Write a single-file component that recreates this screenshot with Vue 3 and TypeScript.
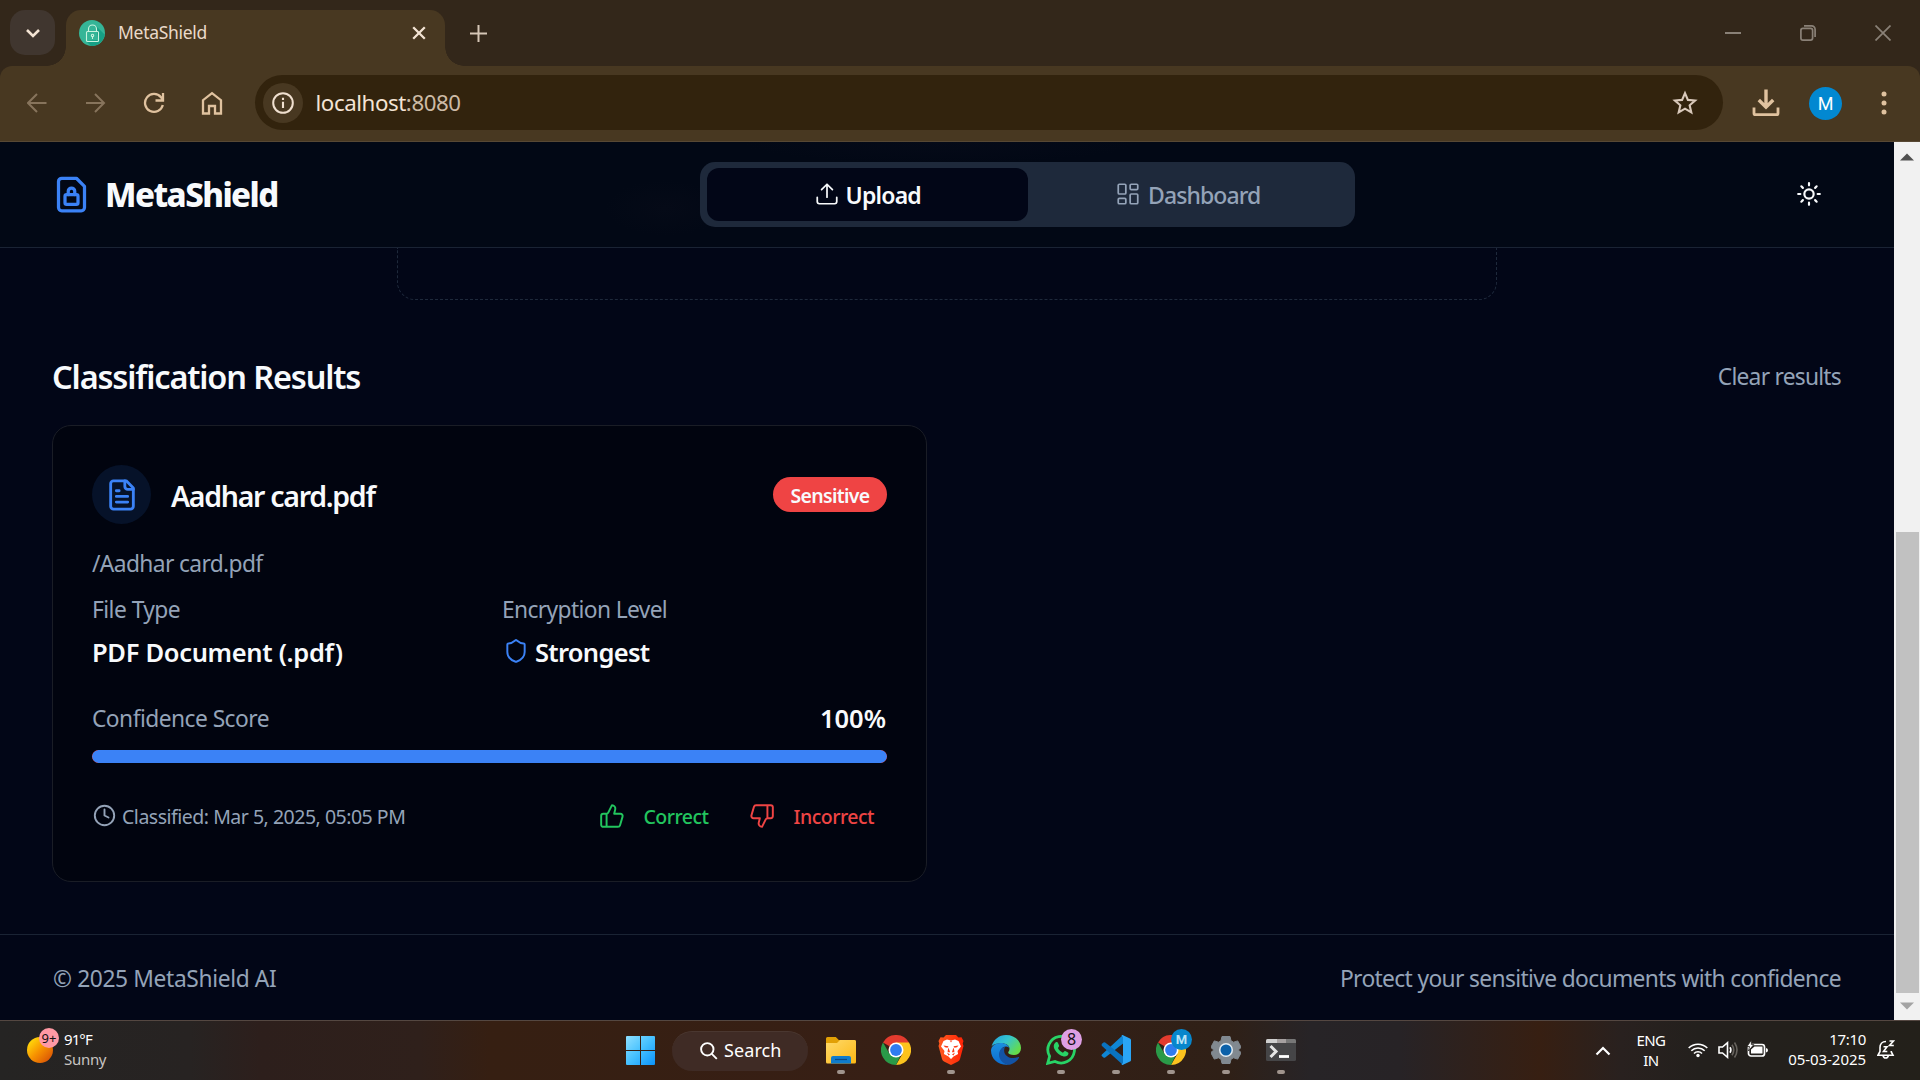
<script setup lang="ts">
interface Task { id: string; label: string; running: boolean; badge?: string; badgeKind?: string }
const tasks: Task[] = [
  { id: 'folder', label: 'File Explorer', running: true },
  { id: 'chrome', label: 'Chrome', running: false },
  { id: 'brave', label: 'Brave', running: true },
  { id: 'edge', label: 'Edge', running: false },
  { id: 'whatsapp', label: 'WhatsApp', running: true, badge: '8', badgeKind: 'pink' },
  { id: 'code', label: 'Code', running: true },
  { id: 'chrome', label: 'Chrome', running: true, badge: 'M', badgeKind: 'blue' },
  { id: 'settings', label: 'Settings', running: true },
  { id: 'terminal', label: 'Terminal', running: true },
]
const confidence = 100
</script>

<template>
  <div class="screen">
    <div class="tabstrip">
      <button class="tab-search" aria-label="Search tabs">
        <svg width="16" height="10" viewBox="0 0 16 10"><path d="M2 2l6 6 6-6" fill="none" stroke="#f3e3d3" stroke-width="2.6" /></svg>
      </button>
      <div class="tab">
        <svg class="favicon" width="26" height="26" viewBox="0 0 26 26">
          <circle cx="13" cy="13" r="13" fill="#35b597" />
          <path d="M17 6l8.6 8.6A13 13 0 0 1 12 26l-5-5 12-1z" fill="#16a085" />
          <g fill="none" stroke="#c9f3df" stroke-width="1.1"><rect x="7.5" y="11.5" width="12" height="10" rx="1" /><path d="M9.5 11.5V9a4 4 0 0 1 8 0v2.500M13.500 16v3" /><circle cx="13.500" cy="15.500" r="1.200" /></g>
        </svg>
        <span class="tab-title">MetaShield</span>
        <svg class="tab-close" width="14" height="14" viewBox="0 0 14 14"><path d="M1.200 1.200l11.600 11.600M12.800 1.200L1.200 12.800" stroke="#f3e3d3" stroke-width="2.300" /></svg>
      </div>
      <svg class="new-tab" width="17" height="17" viewBox="0 0 17 17"><path d="M8.500 0v17M0 8.500h17" stroke="#d5c6b6" stroke-width="2" /></svg>
      <div class="window-controls">
        <svg width="16" height="16" viewBox="0 0 16 16"><path d="M0 8h16" stroke="#8a8177" stroke-width="2" /></svg>
        <svg width="16" height="16" viewBox="0 0 16 16" fill="none" stroke="#8a8177" stroke-width="1.700"><rect x=".9" y="3.400" width="11.700" height="11.700" rx="2" /><path d="M4 .9h7.600a3.500 3.500 0 0 1 3.500 3.500V12" /></svg>
        <svg width="16" height="16" viewBox="0 0 16 16"><path d="M.5.5l15 15M15.500.5l-15 15" stroke="#8a8177" stroke-width="1.700" /></svg>
      </div>
    </div>

    <div class="toolbar">
      <svg class="nav-icon" width="20" height="20" viewBox="0 0 20 20" fill="none" stroke="#87745c" stroke-width="2"><path d="M19.500 10H1.200M10 1L1 10l9 9" /></svg>
      <svg class="nav-icon forward" width="20" height="20" viewBox="0 0 20 20" fill="none" stroke="#87745c" stroke-width="2"><path d="M0 10h18M9 1l9 9-9 9" /></svg>
      <svg class="nav-icon reload" width="22" height="22" viewBox="0 0 22 22" fill="none" stroke="#e0c29f" stroke-width="2.300"><path d="M19.800 13A9 9 0 1 1 18 5.200l1.400 2.200M20 1v7.500h-7.500" /></svg>
      <svg class="nav-icon home" width="22" height="24" viewBox="0 0 22 24" fill="none" stroke="#e0c29f" stroke-width="2.300"><path d="M2 22.500V9.200l9-7 9 7v13.300h-6V15H8v7.500z" /></svg>
      <div class="omnibox">
        <span class="site-info"><svg width="22" height="22" viewBox="0 0 22 22"><circle cx="11" cy="11" r="9.800" fill="none" stroke="#f0e0d0" stroke-width="2" /><path d="M11 9.700V16M11 5.800v2.300" stroke="#f0e0d0" stroke-width="2.100" /></svg></span>
        <span class="url">localhost<span class="port">:8080</span></span>
        <svg class="star" width="26" height="26" viewBox="0 0 26 26"><path d="M13 3.200l2.900 6.700 7.200.65-5.450 4.750 1.650 7.100L13 18.650 6.700 22.400l1.650-7.100L2.900 10.550l7.200-.65z" fill="none" stroke="#d9c9bb" stroke-width="2.100" /></svg>
      </div>
      <svg class="download" width="28" height="28" viewBox="0 0 28 28" fill="none" stroke="#e0c29f" stroke-width="3.400"><path d="M14 .5v17M6.800 11l7.200 7.200 7.200-7.200" /><path d="M2 18.500v5.700c0 1 .5 1.500 1.500 1.500h21c1 0 1.500-.5 1.500-1.500v-5.700" stroke-width="2.800" /></svg>
      <span class="avatar">M</span>
      <svg class="menu" width="6" height="24" viewBox="0 0 6 24" fill="#e0c29f"><circle cx="3" cy="3" r="2.500" /><circle cx="3" cy="12" r="2.500" /><circle cx="3" cy="21" r="2.500" /></svg>
    </div>

    <div class="viewport">
      <div class="page">
        <header class="header">
          <div class="brand">
            <svg width="39" height="39" viewBox="0 0 24 24" class="ico" stroke="#3b82f6" stroke-width="2"><path d="M15 2H6a2 2 0 0 0-2 2v16a2 2 0 0 0 2 2h12a2 2 0 0 0 2-2V7Z" /><rect width="8" height="6" x="8" y="12" rx="1" /><path d="M10 12v-2a2 2 0 1 1 4 0v2" /></svg>
            <span class="brand-name">MetaShield</span>
          </div>
          <nav class="tabs">
            <a class="seg active">
              <svg width="26" height="26" viewBox="0 0 24 24" class="ico" stroke="#f8fafc" stroke-width="1.600"><path d="M21 15v4a2 2 0 0 1-2 2H5a2 2 0 0 1-2-2v-4" /><path d="M17 8l-5-5-5 5M12 3v12" /></svg>
              <span class="upload-label">Upload</span>
            </a>
            <a class="seg">
              <svg width="26" height="26" viewBox="0 0 24 24" class="ico" stroke="#94a3b8" stroke-width="1.600"><rect width="7" height="9" x="3" y="3" rx="1" /><rect width="7" height="5" x="14" y="3" rx="1" /><rect width="7" height="9" x="14" y="12" rx="1" /><rect width="7" height="5" x="3" y="16" rx="1" /></svg>
              <span class="dash-label">Dashboard</span>
            </a>
          </nav>
          <svg class="theme ico" width="26" height="26" viewBox="0 0 24 24" stroke="#f8fafc" stroke-width="2"><circle cx="12" cy="12" r="4.300" /><path d="M12 2v2M12 20v2M4.930 4.930l1.410 1.410M17.660 17.660l1.410 1.410M2 12h2M20 12h2M6.340 17.660l-1.410 1.410M19.070 4.930l-1.410 1.410" /></svg>
        </header>

        <main class="main">
          <div class="dropzone"></div>
          <div class="section-head">
            <h2>Classification Results</h2>
            <a class="clear">Clear results</a>
          </div>
          <article class="card">
            <div class="card-head">
              <span class="file-badge"><svg width="34" height="34" viewBox="0 0 24 24" class="ico" stroke="#3b82f6" stroke-width="2"><path d="M15 2H6a2 2 0 0 0-2 2v16a2 2 0 0 0 2 2h12a2 2 0 0 0 2-2V7Z" /><path d="M14 2v4a2 2 0 0 0 2 2h4M10 9H8M16 13H8M16 17H8" /></svg></span>
              <h3>Aadhar card.pdf</h3>
              <span class="pill">Sensitive</span>
            </div>
            <p class="muted path">/Aadhar card.pdf</p>
            <div class="facts">
              <div class="fact">
                <p class="muted type-label">File Type</p>
                <p class="strong type-value">PDF Document (.pdf)</p>
              </div>
              <div class="fact">
                <p class="muted enc-label">Encryption Level</p>
                <p class="strong level">
                  <svg width="26" height="26" viewBox="0 0 24 24" class="ico" stroke="#3b82f6" stroke-width="1.800"><path d="M20 13c0 5-3.500 7.500-7.660 8.950a1 1 0 0 1-.67-.01C7.500 20.500 4 18 4 13V6a1 1 0 0 1 1-1c2 0 4.500-1.200 6.240-2.720a1.170 1.170 0 0 1 1.520 0C14.510 3.810 17 5 19 5a1 1 0 0 1 1 1z" /></svg>
                  <span>Strongest</span>
                </p>
              </div>
            </div>
            <div class="score"><span class="muted score-label">Confidence Score</span><span class="strong score-value">{{ confidence }}%</span></div>
            <div class="bar"><div class="bar-fill" :style="{ width: confidence + '%' }"></div></div>
            <div class="card-foot">
              <svg width="24" height="24" viewBox="0 0 24 24" class="ico clock" stroke="#94a3b8" stroke-width="1.900"><circle cx="12.500" cy="11.500" r="9.700" /><path d="M12.500 5.500v6l4 2" /></svg>
              <span class="stamp">Classified: Mar 5, 2025, 05:05 PM</span>
              <a class="vote yes">
                <svg width="26" height="26" viewBox="0 0 24 24" class="ico" stroke="#22c55e" stroke-width="1.800"><path d="M7 10v12M15 5.880L14 10h5.830a2 2 0 0 1 1.920 2.560l-2.330 8A2 2 0 0 1 17.500 22H4a2 2 0 0 1-2-2v-8a2 2 0 0 1 2-2h2.760a2 2 0 0 0 1.790-1.110L12 2a3.130 3.130 0 0 1 3 3.880Z" /></svg>
                <span>Correct</span>
              </a>
              <a class="vote no">
                <svg width="26" height="26" viewBox="0 0 24 24" class="ico" stroke="#ef4444" stroke-width="1.800"><path d="M17 14V2M9 18.120L10 14H4.170a2 2 0 0 1-1.920-2.560l2.330-8A2 2 0 0 1 6.500 2H20a2 2 0 0 1 2 2v8a2 2 0 0 1-2 2h-2.760a2 2 0 0 0-1.790 1.110L12 22a3.130 3.130 0 0 1-3-3.880Z" /></svg>
                <span>Incorrect</span>
              </a>
            </div>
          </article>
        </main>
        <footer class="footer"><span class="copy">© 2025 MetaShield AI</span><span class="tagline">Protect your sensitive documents with confidence</span></footer>
      </div>
      <div class="scrollbar">
        <svg width="14" height="8" viewBox="0 0 14 8"><path d="M0 7.500L7 .5l7 7z" fill="#505050" /></svg>
        <div class="thumb"></div>
        <svg width="14" height="8" viewBox="0 0 14 8"><path d="M0 .5h14l-7 7z" fill="#a3a3a3" /></svg>
      </div>
    </div>

    <div class="taskbar">
      <div class="weather">
        <span class="sun"><span class="count">9+</span></span>
        <div class="two-line"><span class="temp">91°F</span><span class="sunny">Sunny</span></div>
      </div>
      <div class="center">
        <svg class="start" width="29" height="29" viewBox="0 0 29 29">
          <defs><linearGradient id="win" x1="0" y1="0" x2="1" y2="1"><stop offset="0" stop-color="#8fe0ff" /><stop offset=".5" stop-color="#45c0ff" /><stop offset="1" stop-color="#0b93fb" /></linearGradient></defs>
          <path d="M1 0h13v14H0V1q0-1 1-1zM15 0h13q1 0 1 1v13H15zM0 15h14v14H1q-1 0-1-1zM15 15h14v13q0 1-1 1H15z" fill="url(#win)" />
        </svg>
        <div class="search">
          <svg width="18" height="18" viewBox="0 0 18 18" fill="none" stroke="#fff" stroke-width="1.900"><circle cx="7.300" cy="7.300" r="6.200" /><path d="M11.800 11.800l5 5" /></svg>
          <span>Search</span>
        </div>
        <div v-for="(t, i) in tasks" :key="i" class="task" :aria-label="t.label">
          <svg v-if="t.id === 'folder'" width="30" height="30" viewBox="0 0 30 30">
            <defs><linearGradient id="fold" x1="0" y1="0" x2="1" y2="1"><stop offset="0" stop-color="#ffda6b" /><stop offset="1" stop-color="#fcb814" /></linearGradient></defs>
            <path d="M0 3.500Q0 2 1.500 2h8.300l3 3H28q2 0 2 2v6H0z" fill="#e2a005" /><path d="M0 8h11l3-3h14.500Q30 5 30 6.500V27q0 1.500-1.500 1.500h-27Q0 28.500 0 27z" fill="url(#fold)" />
            <path d="M5 28.500V23q0-2 2-2h16q2 0 2 2v5.500z" fill="#0f7ccc" /><path d="M9 24.500h12" stroke="#0a4a86" stroke-width="1.200" />
          </svg>
          <svg v-else-if="t.id === 'chrome'" width="30" height="30" viewBox="0 0 30 30">
            <path d="M15 15L2 7.500A15 15 0 0 1 28 7.500z" fill="#e33b2e" /><path d="M15 15V7.500h13A15 15 0 0 1 15 30l6.500-11.200z" fill="#fcc31e" /><path d="M2 7.500l6.500 11.250h6.500l4 3.000L15 30A15 15 0 0 1 2 7.500z" fill="#2a9a48" />
            <circle cx="15" cy="15" r="7.500" fill="#fff" /><circle cx="15" cy="15" r="5.900" fill="#2f7cf0" />
          </svg>
          <svg v-else-if="t.id === 'brave'" width="30" height="30" viewBox="0 0 30 30">
            <defs><linearGradient id="brv"><stop offset="0" stop-color="#ff5a1f" /><stop offset="1" stop-color="#ff2306" /></linearGradient></defs>
            <path d="M10 0h10l2.500 2.500 3-.3L27.500 6l-.8 2.500.8 2.500-3.500 13q-.5 1.500-2 2.500L15 30 8 26.500q-1.500-1-2-2.500L2.500 11l.8-2.500L2.500 6l2-3.800 3 .3z" fill="url(#brv)" />
            <path d="M11 4.500l4 1 4-1 3.500 1.500 2.500 5.500-3.500 4.500.6 3-4.600 2.500L15 24l-2.500-2.500L7.900 19l.6-3L5 11.500 7.500 6z" fill="#fff" />
            <path d="M7.500 10.500l5 .8-1 1.500-2.500-.5zM22.500 10.500l-5 .8 1 1.500 2.500-.5zM12.500 12.500l1.500 4.500-1 .5-1.500-1zM17.500 12.500L16 17l1 .5 1.500-1zM11 17.500l3 2-1.500 1zM19 17.500l-3 2 1.500 1zM14 5.800h2l-1 1.700z" fill="#fb3b17" />
          </svg>
          <svg v-else-if="t.id === 'edge'" width="30" height="30" viewBox="0 0 30 30">
            <defs><linearGradient id="eg" x1="0" y1="0" x2="1" y2=".6"><stop offset="0" stop-color="#1f9fe0" /><stop offset=".5" stop-color="#35c5cf" /><stop offset="1" stop-color="#65dc4a" /></linearGradient><linearGradient id="eb" x1="0" y1="0" x2="0" y2="1"><stop offset="0" stop-color="#1b8fe0" /><stop offset="1" stop-color="#0d6dd0" /></linearGradient></defs>
            <path d="M.5 11.500C2.500 4.500 8 0 15 0c9 0 15 6 15 13 0 4.500-3 7-7 7-3.500 0-5.800-1.300-5.800-2.500 0-.8 1.300-1.500 1.300-3.700 0-3.300-3.500-5.500-8-5.500C6 8.300 2 9.500.5 11.500z" fill="url(#eg)" />
            <path d="M0 15.500C0 11 4.500 8 9.500 8c5.200 0 9 2.700 9 6 0-1.500-1.500-2.500-3.500-2.500-3.500 0-6 3.500-6 7.500 0 5 4 10 9.500 10.600C8.500 31 0 25 0 15.500z" fill="url(#eb)" />
            <path d="M14 11.700c-3.500.8-6 4-6 8 0 5.300 5 10.300 11 10 4-1 7.500-4 9-7 .3-.7-.3-1-.8-.7-7.500 3.500-17-2-13.200-10.300z" fill="#1353a5" />
          </svg>
          <svg v-else-if="t.id === 'whatsapp'" width="30" height="30" viewBox="0 0 30 30">
            <path d="M1.700 28.300l1.900-7A13.300 13.300 0 1 1 9 26.500z" fill="none" stroke="#28d366" stroke-width="2.800" />
            <path d="M9.500 7.500c1-.8 2-.6 2.400.3l1.200 2.800c.3.800-.8 1.800-1.200 2.400.9 2 2.800 3.800 5 4.700.7-.6 1.500-2 2.300-1.700l2.800 1.400c.8.500.5 2.100-.5 3-2 1.700-4.300 1.300-7.500-.4-2.500-1.500-4.500-3.800-5.700-6.200-1-2.500-.6-4.800 1.200-6.300z" fill="#28d366" />
          </svg>
          <svg v-else-if="t.id === 'code'" width="30" height="30" viewBox="0 0 30 30">
            <path d="M22 0l-20 18.500Q-.3 20 1 21.200l1.500 1.300q.8.500 1.700-.1L24 7z" fill="#0f86d4" /><path d="M22 30L1 11Q0 10 1 8.800l1.500-1.300q.8-.5 1.700.1L24 23z" fill="#0a73bf" /><path d="M22 .2l7 3.300q1 .5 1 1.500v20q0 1-1 1.500l-7 3.300q-1 .3-1.500-.5l1.500-1.300V2L20.500.7q.5-.8 1.500-.5z" fill="#2aa5f5" /><path d="M22 2h3v26h-3z" fill="#2aa5f5" />
          </svg>
          <svg v-else-if="t.id === 'settings'" width="30" height="30" viewBox="0 0 30 30">
            <path d="M11 1.500h8l1 4.300 2.500 1.400 4.200-1.300 3.500 6.500-3 2.600 3 2.600-3.500 6.500-4.200-1.300-2.500 1.400-1 4.300h-8l-1-4.300-2.500-1.400-4.200 1.300-3.500-6.500 3-2.600-3-2.600 3.500-6.500 4.200 1.300L10 5.800z" fill="#818990" stroke="#818990" stroke-width="1" stroke-linejoin="round" />
            <circle cx="15" cy="15" r="7" fill="#e4edf3" /><circle cx="15" cy="15" r="5.500" fill="#0b61a9" />
          </svg>
          <svg v-else width="30" height="30" viewBox="0 0 30 30">
            <rect y="4" width="30" height="22" rx="1.500" fill="#454547" /><path d="M0 8V5.500Q0 4 1.500 4H11v4z" fill="#cfcfcf" /><path d="M11 4h9v4h-9z" fill="#a5a0a0" /><path d="M20 4h8.500Q30 4 30 5.500V8H20z" fill="#777" /><path d="M4.500 11l5.500 5.500L4.500 22" fill="none" stroke="#e5e5e5" stroke-width="3" /><path d="M13 21.500h10" stroke="#fff" stroke-width="2.800" />
          </svg>
          <span v-if="t.badge" class="task-badge" :class="t.badgeKind">{{ t.badge }}</span>
          <i v-if="t.running" class="dot"></i>
        </div>
      </div>
      <div class="tray">
        <svg class="chev" width="16" height="10" viewBox="0 0 16 10"><path d="M1.500 8.500L8 2l6.500 6.500" fill="none" stroke="#fff" stroke-width="2.200" /></svg>
        <div class="two-line lang"><span>ENG</span><span>IN</span></div>
        <svg class="wifi" width="20" height="16" viewBox="0 0 20 16" fill="none" stroke="#fff" stroke-width="1.600"><path d="M.7 6a13.300 13.300 0 0 1 18.600 0M3.300 8.800a9.500 9.500 0 0 1 13.400 0M6 11.500a5.600 5.600 0 0 1 8 0" /><circle cx="10" cy="13.500" r="1.700" fill="#fff" stroke="none" /></svg>
        <svg class="vol" width="20" height="18" viewBox="0 0 20 18" fill="none" stroke="#fff" stroke-width="1.600"><path d="M1 6h3.500l5-4.300v14.600l-5-4.300H1z" /><path d="M12 6.300q1.800 2.700 0 5.400" /><path d="M14 3.800q3.500 5.200 0 10.400M16.500 1.500q5 7.500 0 15" stroke="#66625d" /></svg>
        <svg class="bat" width="21" height="18" viewBox="0 0 21 18"><rect x="1.500" y="4.500" width="16" height="11.500" rx="2.500" fill="none" stroke="#fff" stroke-width="1.700" /><path d="M4 13.500V9.500L7.500 6.500h8v7zM19 8q2 .3 2 2.300T19 12.500z" fill="#fff" /><path d="M4.500 0L0 6.500h2.500L1.500 11l5.300-6.500H4.300z" fill="#fff" stroke="#24221e" stroke-width=".8" /></svg>
        <div class="two-line clock-text"><span>17:10</span><span class="date">05-03-2025</span></div>
        <svg class="bell" width="18" height="19" viewBox="0 0 18 19" fill="none" stroke="#fff" stroke-width="1.600"><path d="M9 1.500C5 1.500 3 4.500 3 7.500v4L1 15.200h15l-1.700-3.200V11M6 15.500q.5 2.500 2.700 2.500t2.700-2.500M6.500 6.700H10L6.500 11.500H10.300" /><path d="M12.500 1h4l-4 4.500h4.300" /></svg>
      </div>
    </div>
  </div>
</template>

<style>
html, body { margin: 0; overflow: hidden; background: #020617; }
</style>

<style scoped>
* { box-sizing: border-box; }
h2, h3, p { margin: 0; }
svg { display: block; flex: none; }
.screen { width: 1920px; height: 1080px; display: flex; flex-direction: column; overflow: hidden; font-family: "Noto Sans", "Open Sans", sans-serif; background: #33271a; white-space: nowrap; }
.ico { fill: none; stroke-linecap: round; stroke-linejoin: round; }

.tabstrip { height: 66px; flex: none; display: flex; align-items: flex-start; padding: 10px 29px 0 10px; background: #33271a; }
.tab-search { width: 45px; height: 45px; padding: 0; border: 0; border-radius: 15px; background: #40362f; display: flex; align-items: center; justify-content: center; }
.tab { position: relative; width: 379px; height: 56px; margin-left: 11px; padding: 10px 19px 0 13px; border-radius: 15px 15px 0 0; background: #483821; display: flex; align-items: flex-start; }
.tab::before, .tab::after { content: ""; position: absolute; bottom: 0; width: 19px; height: 19px; }
.tab::before { left: -19px; background: radial-gradient(circle at 0 0, transparent 18.500px, #483821 19px); }
.tab::after { right: -19px; background: radial-gradient(circle at 100% 0, transparent 18.500px, #483821 19px); }
.tab-title { margin-left: 13px; line-height: 25px; font-size: 17.500px; letter-spacing: -.3px; color: #eadaca; }
.tab-close { margin: 6px 0 0 auto; }
.new-tab { margin: 15px 0 0 24.500px; }
.window-controls { margin: 15px 0 0 auto; display: flex; gap: 59px; }

.toolbar { height: 76px; flex: none; display: flex; align-items: center; padding: 0 33px 2px 27px; background: #483821; border-bottom: 1px solid #574834; border-radius: 12px 12px 0 0; }
.nav-icon { margin-right: 39px; }
.forward { margin-right: 37px; }
.reload { margin-right: 36px; }
.home { margin-right: 32px; }
.omnibox { width: 1468px; height: 55px; padding: 0 25px 0 8px; border-radius: 28px; background: #32230d; display: flex; align-items: center; }
.site-info { width: 40px; height: 40px; border-radius: 50%; background: #483821; display: flex; align-items: center; justify-content: center; }
.url { margin-left: 12.500px; font-size: 22.300px; letter-spacing: -.43px; color: #f4e4d5; line-height: 30px; }
.port { color: #cdbba6; }
.star { margin-left: auto; }
.download { margin-left: 29px; }
.avatar { width: 33px; height: 33px; margin-left: 29px; margin-top: 1px; border-radius: 50%; background: #0288d1; color: #fff; font: 18px/33px Roboto, sans-serif; text-align: center; }
.menu { margin-left: auto; }

.viewport { height: 878px; flex: none; display: flex; }
.page { width: 1894px; height: 878px; display: flex; flex-direction: column; background: #020617; color: #f8fafc; }
.header { position: relative; height: 106px; flex: none; display: flex; align-items: center; padding: 0 72px 0 52px; border-bottom: 1px solid #1a2334; background: radial-gradient(ellipse 60px 28px at 665px 66px, #050a17, transparent), radial-gradient(ellipse 200px 22px at 940px 0, #050a18, transparent), #020815; }
.brand { width: 648px; display: flex; align-items: center; }
.brand-name { margin-left: 14px; font-size: 33px; font-weight: 800; letter-spacing: -1.550px; line-height: 44px; }
.tabs { width: 655px; height: 65px; padding: 6px 7px; border-radius: 15px; background: #1e293b; display: flex; }
.seg { flex: 1; height: 53px; border-radius: 12px; display: flex; align-items: center; justify-content: center; font-size: 23px; font-weight: 500; color: #94a3b8; }
.seg svg { margin-bottom: 1px; }
.seg.active { background: #020617; color: #f8fafc; font-weight: 600; }
.seg span { margin-left: 7px; line-height: 30px; letter-spacing: -.9px; }
.seg .upload-label { margin-left: 6px; letter-spacing: -.8px; }
.theme { margin-left: auto; margin-bottom: 2px; }

.main { flex: 1; padding: 0 53px 0 52px; }
.dropzone { width: 1100px; height: 52px; margin-left: 345px; border: 1px dashed #1e293b; border-top: 0; border-radius: 0 0 18px 18px; }
.section-head { height: 44px; margin-top: 54px; display: flex; align-items: center; justify-content: space-between; }
h2 { margin-top: 2px; font-size: 32.500px; line-height: 44px; font-weight: 600; letter-spacing: -1.150px; }
.clear { margin-top: 1px; font-size: 22.800px; line-height: 32px; color: #94a3b8; letter-spacing: -.76px; }
.card { width: 875px; height: 457px; margin-top: 27px; padding: 39px 39px; border: 1px solid #1a1d26; border-radius: 19px; background: #01040f; }
.card-head { height: 59px; display: flex; align-items: center; }
.file-badge { width: 59px; height: 59px; border-radius: 50%; background: #061229; display: flex; align-items: center; justify-content: center; }
h3 { margin-left: 20px; margin-top: 3px; font-size: 28.500px; line-height: 40px; font-weight: 600; letter-spacing: -1.290px; }
.pill { width: 114px; height: 35px; margin-left: auto; border-radius: 18px; background: #ef4444; font-size: 19.500px; line-height: 37px; font-weight: 600; letter-spacing: -.7px; text-align: center; }
.muted { height: 30px; font-size: 22.800px; line-height: 32px; color: #94a3b8; letter-spacing: -.64px; }
.strong { font-size: 25.500px; line-height: 34px; font-weight: 600; letter-spacing: -.5px; }
.path { margin-top: 24px; }
.facts { margin-top: 16px; display: flex; }
.fact { width: 410px; flex: none; }
.fact .strong { margin-top: 11px; }
.type-label, .score-label { letter-spacing: -.55px; }
.type-value { letter-spacing: -.32px; }
.level { display: flex; align-items: center; letter-spacing: -.7px; }
.level svg { margin-bottom: 3px; margin-left: 1px; }
.level span { margin-left: 6px; }
.score { margin-top: 32px; height: 34px; display: flex; align-items: center; justify-content: space-between; }
.score-value { letter-spacing: 0; margin-right: 1px; }
.bar { height: 13px; margin-top: 15px; border-radius: 7px; overflow: hidden; background: #ef4444; }
.bar-fill { height: 13px; border-radius: 7px; background: #3b82f6; }
.card-foot { margin-top: 38px; height: 30px; display: flex; align-items: center; font-size: 19.500px; }
.stamp { margin-left: 6px; color: #94a3b8; letter-spacing: -.49px; }
.vote { display: flex; align-items: center; font-weight: 500; letter-spacing: -.5px; }
.vote svg { margin-bottom: 1px; }
.vote span { margin-left: 19px; }
.vote.yes { margin-left: auto; color: #22c55e; }
.vote.yes span { margin-left: 18px; }
.vote.no { margin-left: 40px; margin-right: 13px; color: #ef4444; }
.footer { height: 86px; flex: none; padding: 1px 53px 0 53px; border-top: 1px solid #1a2334; display: flex; align-items: center; justify-content: space-between; font-size: 22.800px; color: #94a3b8; }
.copy { letter-spacing: -.38px; }
.tagline { letter-spacing: -.65px; }

.scrollbar { width: 26px; background: #f1f1f1; display: flex; flex-direction: column; align-items: center; padding: 11px 0 10px; }
.thumb { width: 23px; height: 461px; margin: auto 0 9px 1px; background: #c1c1c1; }

.taskbar { height: 60px; flex: none; position: relative; display: flex; align-items: center; border-top: 1px solid #544741; background: linear-gradient(90deg, #252423 0, #272322 190px, #2d1f1c 260px, #2f201b 420px, #361f12 490px, #371f15 900px, #2f2017 1230px, #272427 1310px, #272326 1400px, #371f12 1540px, #29211f 1620px, #23201d 1700px, #23201a 100%); color: #fff; }
.weather { width: 599px; display: flex; padding-left: 27px; }
.sun { position: relative; width: 26px; height: 26px; margin-top: -1px; border-radius: 50%; background: linear-gradient(135deg, #ffd40a 15%, #f79200 50%, #d95306 90%); align-self: center; }
.count { position: absolute; left: 12px; top: -9px; width: 20px; height: 20px; border-radius: 50%; background: #ff99a4; color: #111; font-size: 13px; line-height: 20px; text-align: center; }
.two-line { display: flex; flex-direction: column; margin-bottom: 4px; font-size: 15px; line-height: 20px; letter-spacing: -.3px; }
.temp { letter-spacing: -.9px; }
.weather .two-line { margin-left: 11px; }
.sunny { color: #c8c4c2; }
.center { width: 960px; display: flex; align-items: center; height: 59px; padding-left: 27px; }
.search { width: 136px; height: 40px; margin-left: 17px; margin-right: 6px; padding-left: 28px; border-radius: 20px; background: #3f2b25; border-top: 1px solid #4a3730; display: flex; align-items: center; font-size: 18px; }
.search svg { margin-bottom: 1px; }
.search span { margin-left: 6px; margin-bottom: 2px; letter-spacing: .1px; }
.task { position: relative; width: 55px; height: 59px; display: flex; align-items: center; justify-content: center; }
.task svg { margin-top: -1px; margin-right: 2px; }
.task-badge { position: absolute; left: 27px; top: 8px; width: 21px; height: 21px; border-radius: 50%; text-align: center; font-size: 16px; line-height: 21px; }
.pink { background: #dd9fe4; color: #151015; }
.blue { background: #0786cc; color: #b8e2f5; font: 700 13px/21px Roboto, sans-serif; }
.dot { position: absolute; left: 23px; top: 49px; width: 8px; height: 4px; border-radius: 2px; background: #a0948d; }
.tray { flex: 1; display: flex; align-items: center; padding-left: 36px; }
.lang { margin-left: 25px; margin-bottom: 2px; width: 30px; align-items: center; letter-spacing: -.6px; }
.wifi { margin-left: 22px; margin-bottom: 2px; }
.vol { margin-left: 10px; margin-bottom: 2px; }
.bat { margin-left: 9px; margin-bottom: 3px; }
.clock-text { width: 98px; align-items: flex-end; }
.date { letter-spacing: -.05px; }
.bell { margin-left: 11px; margin-bottom: 2px; }
</style>
